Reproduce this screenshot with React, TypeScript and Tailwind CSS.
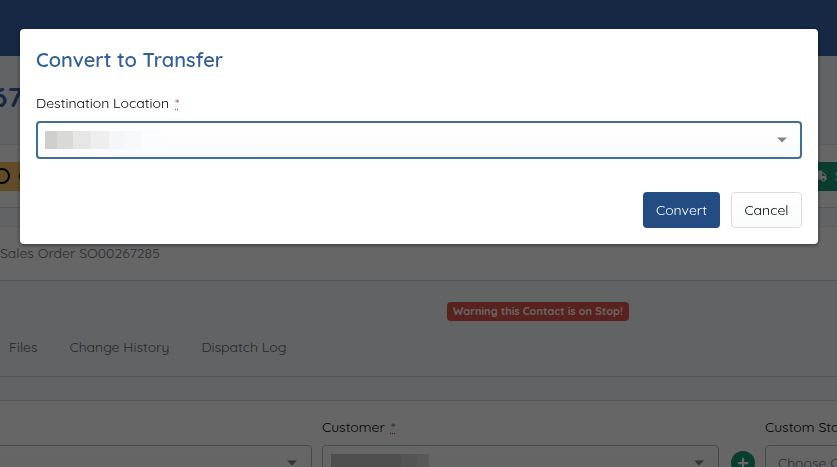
import { FaPlus, FaTruck } from "react-icons/fa";

type SelectFieldProps = {
  id: string;
  label: string;
  options: string[];
  required?: boolean;
  focused?: boolean;
  swatches?: string[];
};

const destinationSwatches = [
  "w-3 bg-[#cfcfcd]",
  "w-4 bg-[#d9d9d8]",
  "w-[18px] bg-[#e6e6e6]",
  "w-[18px] bg-[#eeeeef]",
  "w-4 bg-[#f5f6f7]",
  "w-4 bg-[#f8f9fa]",
  "w-5 bg-[#fbfcfd]",
];

const customerSwatches = [
  "w-[70px] bg-[#c6c6c6]",
  "w-4 bg-[#d2d2d2]",
  "w-3 bg-[#dddddd]",
];

function SelectField({ id, label, options, required, focused, swatches }: SelectFieldProps) {
  return (
    <div className="min-w-0 flex-1">
      <label htmlFor={id} className="block text-sm whitespace-nowrap text-black">
        {label}
        {required && (
          <abbr title="required" className="ml-1.5 text-[#b5554f] decoration-[#b5554f]">
            *
          </abbr>
        )}
      </label>
      <div className="relative mt-2">
        <select
          id={id}
          className={`block w-full appearance-none rounded-[4px] bg-linear-to-b from-white to-[#f9fafb] px-3 text-sm text-[#6b7280] outline-none ${
            focused ? "h-[38px] border-2 border-[#3f6f94]" : "h-9 border border-[#b4b8bf]"
          }`}
        >
          {options.map((option) => (
            <option key={option}>{option}</option>
          ))}
        </select>
        {swatches && (
          <div aria-hidden className="pointer-events-none absolute top-1/2 left-[9px] flex h-[18px] -translate-y-1/2">
            {swatches.map((swatch) => (
              <span key={swatch} className={swatch} />
            ))}
          </div>
        )}
        <span
          aria-hidden
          className="pointer-events-none absolute top-1/2 right-[15px] -translate-y-1/2 border-x-[5px] border-t-[5px] border-x-transparent border-t-[#85858f]"
        />
      </div>
    </div>
  );
}

function OrderPage() {
  return (
    <div className="bg-[#f6f8fb]">
      <header className="h-14 bg-[#3764aa]" />

      <div className="flex h-[89px] items-center border-b border-[#e3e5e8]">
        <h1 className="-ml-2 pb-1.5 text-[28px] leading-8 font-bold text-[#3764aa]">67</h1>
      </div>

      <div className="flex h-[63px] items-center justify-between border-b border-[#d5d8dc] bg-white">
        <button className="-ml-1.5 flex h-[29px] w-20 items-center gap-2 bg-[#f5bf62] text-sm text-black">
          <span className="size-4 shrink-0 rounded-full border-2 border-black" />
          On Hold
        </button>
        <button className="-mr-10 flex h-[29px] w-[76px] items-center gap-2 bg-[#189a78] pl-3 text-sm font-semibold text-white">
          <FaTruck className="shrink-0" size={14} />
          Ship
        </button>
      </div>

      <div className="mt-[18px] flex h-[55px] items-center border-y border-[#e3e5e8] border-b-[#d5d8dc] bg-white pb-0.5 text-sm text-[#6b7280]">
        Sales Order SO00267285
      </div>

      <div className="border-b border-[#d5d8dc] pt-[21px] pb-[19px]">
        <div className="ml-[447px] flex">
          <span className="rounded-[4px] bg-[#e2564c] px-1.5 text-[11px] leading-[19px] font-bold whitespace-nowrap text-white">
            Warning this Contact is on Stop!
          </span>
        </div>
        <nav className="mt-4 flex gap-8 pl-[9px] text-sm whitespace-nowrap text-[#5f6470]">
          <a href="#files">Files</a>
          <a href="#history">Change History</a>
          <a href="#dispatch">Dispatch Log</a>
        </nav>
      </div>

      <div className="mt-[23px] flex border-t border-[#d5d8dc] bg-white pt-4 pb-8">
        <div className="-ml-20 flex w-[392px] shrink-0">
          <SelectField id="reference" label="Reference" options={[""]} />
        </div>
        <div className="ml-2.5 flex min-w-0 flex-1">
          <SelectField id="customer" label="Customer" options={[""]} required swatches={customerSwatches} />
        </div>
        <button
          aria-label="Add customer"
          className="mr-[10px] ml-3 mt-[34px] flex size-6 shrink-0 items-center justify-center rounded-full bg-[#189a78] text-white"
        >
          <FaPlus size={12} />
        </button>
        <div className="-mr-20 flex w-[152px] shrink-0">
          <SelectField id="status" label="Custom Status" options={["Choose Custom Status"]} />
        </div>
      </div>
    </div>
  );
}

function ConvertDialog() {
  return (
    <div className="fixed inset-0 bg-black/60 pt-[29px] pr-[19px] pl-5">
      <div
        role="dialog"
        aria-modal="true"
        aria-labelledby="convert-title"
        className="rounded-[4px] bg-white p-4 shadow-[0_1px_4px_rgba(0,0,0,0.5)]"
      >
        <h2 id="convert-title" className="text-xl leading-[30px] font-semibold text-[#335f9b]">
          Convert to Transfer
        </h2>
        <form className="mt-[18px]" onSubmit={(event) => event.preventDefault()}>
          <SelectField
            id="destination"
            label="Destination Location"
            options={[""]}
            required
            focused
            swatches={destinationSwatches}
          />
          <div className="mt-[33px] flex justify-end gap-[11px] text-sm">
            <button type="submit" className="h-9 w-[77px] rounded-[4px] bg-[#234c82] text-white">
              Convert
            </button>
            <button
              type="button"
              className="h-9 w-[71px] rounded-[4px] border border-[#d9dce1] bg-linear-to-b from-white to-[#f9fafb] text-black"
            >
              Cancel
            </button>
          </div>
        </form>
      </div>
    </div>
  );
}

export default function App() {
  return (
    <div className="h-screen overflow-hidden font-[Quicksand,Lato,sans-serif]">
      <OrderPage />
      <ConvertDialog />
    </div>
  );
}
